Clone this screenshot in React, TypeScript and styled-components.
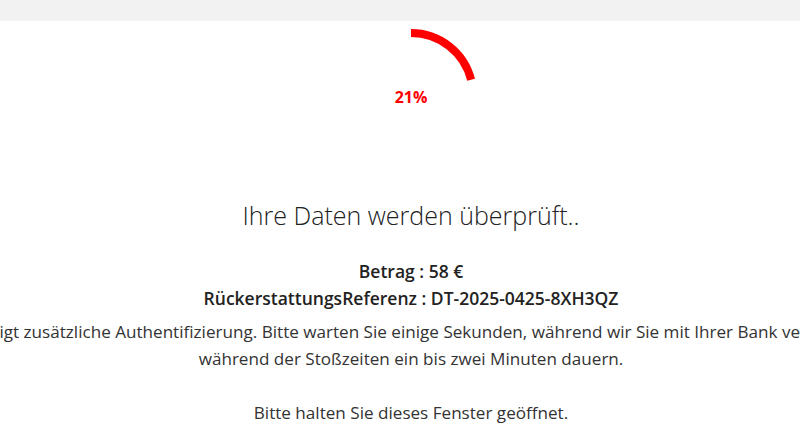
import React from "react";
import styled, { createGlobalStyle } from "styled-components";

const Global = createGlobalStyle`
  html, body { margin: 0; padding: 0; background: #fff; overflow: hidden; }
  body { font-family: "Open Sans", "Noto Sans", sans-serif; color: #333; }
`;

const TopBar = styled.header`
  height: 21px;
  background: #f2f2f2;
  width: 100%;
`;

const Main = styled.main`
  width: 822px;
  display: flex;
  flex-direction: column;
  align-items: center;
`;

const SpinnerWrap = styled.div`
  position: relative;
  width: 140px;
  height: 140px;
  margin-top: 4px;
`;

const Percent = styled.div`
  position: absolute;
  inset: 0;
  display: flex;
  align-items: center;
  justify-content: center;
  padding-top: 4px;
  color: #f00;
  font-weight: 700;
  font-size: 16px;
`;

const Title = styled.h1`
  margin: 34px 0 0;
  font-weight: 300;
  font-size: 25px;
  line-height: 32px;
  color: #222;
`;

const Info = styled.p<{ $gap?: number }>`
  margin: ${(p) => p.$gap ?? 0}px 0 0;
  font-weight: 600;
  font-size: 17.5px;
  line-height: 27px;
  color: #222;
`;

const Note = styled.div`
  margin-top: 6px;
  width: 100%;
  display: flex;
  justify-content: center;
`;

const NoteText = styled.p`
  margin: 0;
  flex-shrink: 0;
  white-space: nowrap;
  text-align: center;
  font-size: 17.1px;
  line-height: 27px;
  color: #333;
`;

const Progress: React.FC<{ value: number }> = ({ value }) => {
  const r = 62;
  const c = 2 * Math.PI * r;
  return (
    <SpinnerWrap>
      <svg width="140" height="140" viewBox="0 0 140 140">
        <circle
          cx="70"
          cy="70"
          r={r}
          fill="none"
          stroke="#ff0000"
          strokeWidth="8"
          strokeDasharray={`${(c * value) / 100} ${c}`}
          transform="rotate(-90 70 70)"
        />
      </svg>
      <Percent>{value}%</Percent>
    </SpinnerWrap>
  );
};

export default function App() {
  return (
    <>
      <Global />
      <TopBar />
      <Main>
        <Progress value={21} />
        <Title>Ihre Daten werden überprüft..</Title>
        <Info $gap={27}>Betrag : 58 €</Info>
        <Info>RückerstattungsReferenz : DT-2025-0425-8XH3QZ</Info>
        <Note>
          <NoteText>
            Ihre Bank benötigt zusätzliche Authentifizierung. Bitte warten Sie einige Sekunden, während wir Sie mit Ihrer Bank verbinden. Dies kann
            <br />
            während der Stoßzeiten ein bis zwei Minuten dauern.
            <br />
            <br />
            Bitte halten Sie dieses Fenster geöffnet.
          </NoteText>
        </Note>
      </Main>
    </>
  );
}
